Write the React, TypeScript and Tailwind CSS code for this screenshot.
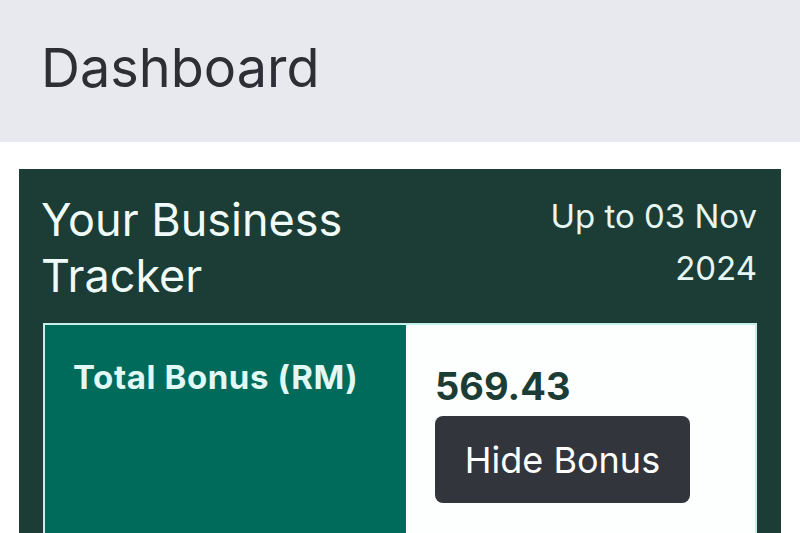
import React from "react";

export default function App() {
  return (
    <div className="w-[800px] h-[533px] overflow-hidden bg-white" style={{ fontFamily: "Inter, 'Noto Sans', sans-serif" }}>
      <div className="h-[142px] bg-[#e8e9ee] flex items-center pl-[41px]">
        <h1 className="text-[54px] leading-none text-[#2e2f35] -mt-[6px]">Dashboard</h1>
      </div>
      <div className="pt-[27px] pl-[19px] pr-[19px]">
        <div className="bg-[#1b3d35] pt-[24px] px-[24px]">
          <div className="flex justify-between items-start">
            <div className="text-[45px] leading-[56px] text-[#f0fbf9] -ml-[2px] -mt-[1px]">
              Your Business<br />Tracker
            </div>
            <div className="text-[33px] leading-[52px] text-[#e6f6f3] text-right -mt-[3px]">
              Up to 03 Nov<br />2024
            </div>
          </div>
          <div className="mt-[19px] flex border-2 border-[#c7efe9] h-[220px]">
            <div className="w-[361px] bg-[#006b5a] pl-[28px] pt-[36px]">
              <div className="text-[33px] font-bold leading-none tracking-[0.6px] text-[#e2f8f4]">Total Bonus (RM)</div>
            </div>
            <div className="flex-1 bg-[#fdfefe] pl-[29px] pt-[42px]">
              <div className="text-[38px] font-bold leading-none text-[#1b3d35]">569.43</div>
              <button className="mt-[11px] w-[255px] h-[87px] rounded-[8px] bg-[#33353d] text-white text-[36px]">
                Hide Bonus
              </button>
            </div>
          </div>
        </div>
      </div>
    </div>
  );
}
